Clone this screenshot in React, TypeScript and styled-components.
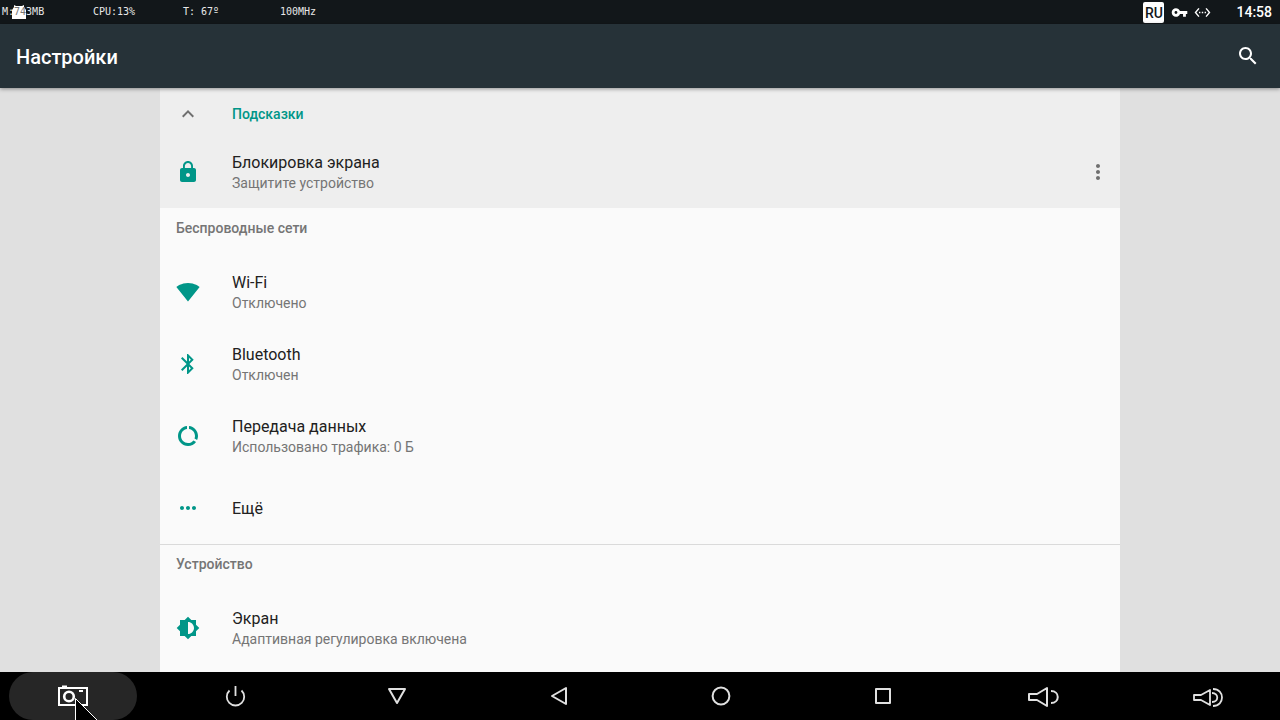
import React from "react";
import styled, { createGlobalStyle } from "styled-components";

const Global = createGlobalStyle`
  * { box-sizing: border-box; }
  body { margin: 0; background: #000; font-family: Roboto, "Liberation Sans", sans-serif; }
  button { border: 0; padding: 0; margin: 0; background: none; color: inherit; font: inherit; text-align: left; cursor: pointer; }
  svg { display: block; flex: none; }
`;

const Shell = styled.div`
  display: flex;
  flex-direction: column;
  height: 100vh;
  overflow: hidden;
`;

const StatusBar = styled.div`
  display: flex;
  justify-content: space-between;
  flex: none;
  height: 24px;
  padding: 0 8px 0 2px;
  background: #12171a;
  color: #fff;
`;

const Monitor = styled.div`
  position: relative;
  display: grid;
  grid-template-columns: 91px 90px 97px auto;
  color: #e8e8e8;
  font: 10px/23px "DejaVu Sans Mono", monospace;
  white-space: pre;
`;

const Notification = styled.svg`
  position: absolute;
  left: 10px;
  top: 5px;
`;

const Reading = styled.span`
  position: relative;
`;

const Covered = styled.span`
  color: #777;
`;

const Tray = styled.div`
  display: flex;
  align-items: center;
`;

const TrayIcons = styled.div`
  display: flex;
  gap: 6px;
  margin: 0 25px 0 7px;
`;

const Lang = styled.span`
  width: 21px;
  height: 21px;
  border-radius: 2px;
  background: #fff;
  color: #12171a;
  font-size: 14px;
  font-weight: 500;
  line-height: 22px;
  text-align: center;
`;

const Clock = styled.time`
  font-size: 14px;
  font-weight: 500;
  line-height: 24px;
`;

const AppBar = styled.header`
  position: relative;
  z-index: 1;
  display: flex;
  align-items: center;
  justify-content: space-between;
  flex: none;
  height: 64px;
  padding: 0 20px 0 16px;
  background: #263238;
  color: #fff;
  box-shadow: 0 1px 4px rgba(0, 0, 0, 0.4);
`;

const Title = styled.h1`
  margin: 0;
  padding-top: 2px;
  font-size: 20px;
  font-weight: 500;
  line-height: 24px;
`;

const Content = styled.main`
  display: flex;
  flex-direction: column;
  flex: 1;
  min-height: 0;
  padding: 0 12.5%;
  overflow: hidden;
  background: #e0e0e0;
`;

const Group = styled.section<{ $tinted?: boolean; $divided?: boolean }>`
  flex: none;
  background: ${(p) => (p.$tinted ? "#eeeeee" : "#fafafa")};
  box-shadow: ${(p) => (p.$divided ? "inset 0 1px #dadada" : "none")};

  &:last-child {
    flex: 1 0 auto;
  }
`;

const Line = styled.div`
  display: flex;
  align-items: center;
`;

const SuggestionHead = styled.button`
  display: flex;
  align-items: center;
  width: 100%;
  height: 48px;
  padding: 4px 16px 0;
  gap: 32px;
  color: #009688;
  font-size: 14px;
  font-weight: 500;

  svg {
    color: #6f6f6f;
  }
`;

const GroupTitle = styled.h2`
  margin: 0;
  padding: 10px 16px 18px;
  color: #757575;
  font-size: 14px;
  font-weight: 500;
  line-height: 20px;
`;

const Row = styled.button`
  display: flex;
  align-items: center;
  flex: 1;
  width: 100%;
  height: 72px;
  padding: 0 16px;
  gap: 32px;
  color: #009688;
`;

const RowText = styled.span`
  padding-top: 2px;
  line-height: 20px;
`;

const Label = styled.span`
  display: block;
  color: #212121;
  font-size: 16px;
`;

const Summary = styled.span`
  display: block;
  color: #757575;
  font-size: 14px;
`;

const IconButton = styled.button<{ $color: string }>`
  flex: none;
  color: ${(p) => p.$color};
`;

const MoreButton = styled(IconButton)`
  margin-right: 10px;
`;

const NavBar = styled.nav`
  display: flex;
  justify-content: space-between;
  flex: none;
  height: 48px;
  padding: 0 9px;
  background: #000;
`;

const NavButton = styled.button<{ $active?: boolean }>`
  display: flex;
  align-items: center;
  justify-content: center;
  flex: 0 1 128px;
  height: 48px;
  border-radius: 24px;
  background: ${(p) => (p.$active ? "#262626" : "transparent")};
  color: #e0e0e0;
`;

const NavArt = styled.svg`
  overflow: visible;
`;

const Glyph = ({ d, size = 24 }: { d: string; size?: number }) => (
  <svg width={size} height={size} viewBox="0 0 24 24" fill="currentColor" aria-hidden="true">
    <path d={d} />
  </svg>
);

const NavGlyph = ({ children }: { children: React.ReactNode }) => (
  <NavArt width="36" height="32" viewBox="0 0 36 32" fill="none" stroke="currentColor" strokeWidth="2" strokeLinejoin="round" aria-hidden="true">
    {children}
  </NavArt>
);

const icons = {
  search: "M15.5 14h-.79l-.28-.27C15.41 12.59 16 11.11 16 9.5 16 5.91 13.09 3 9.5 3S3 5.91 3 9.5 5.91 16 9.5 16c1.61 0 3.09-.59 4.23-1.57l.27.28v.79l5 4.99L20.49 19l-4.99-5zm-6 0C7.01 14 5 11.99 5 9.5S7.01 5 9.5 5 14 7.01 14 9.5 11.99 14 9.5 14z",
  collapse: "M12 8l-6 6 1.41 1.41L12 10.83l4.59 4.58L18 14z",
  lock: "M18 8h-1V6c0-2.76-2.24-5-5-5S7 3.24 7 6v2H6c-1.1 0-2 .9-2 2v10c0 1.1.9 2 2 2h12c1.1 0 2-.9 2-2V10c0-1.1-.9-2-2-2zm-6 9c-1.1 0-2-.9-2-2s.9-2 2-2 2 .9 2 2-.9 2-2 2zm3.1-9H8.9V6c0-1.71 1.39-3.1 3.1-3.1 1.71 0 3.1 1.39 3.1 3.1v2z",
  more: "M12 8c1.1 0 2-.9 2-2s-.9-2-2-2-2 .9-2 2 .9 2 2 2zm0 2c-1.1 0-2 .9-2 2s.9 2 2 2 2-.9 2-2-.9-2-2-2zm0 6c-1.1 0-2 .9-2 2s.9 2 2 2 2-.9 2-2-.9-2-2-2z",
  wifi: "M12.01 21.49L23.64 7c-.45-.34-4.93-4-11.64-4C5.28 3 .81 6.66.36 7l11.63 14.49.01.01.01-.01z",
  bluetooth: "M17.71 7.71L12 2h-1v7.59L6.41 5 5 6.41 10.59 12 5 17.59 6.41 19 11 14.41V22h1l5.71-5.71-4.3-4.29 4.3-4.29zM13 5.83l1.88 1.88L13 9.59V5.83zm1.88 10.46L13 18.17v-3.76l1.88 1.88z",
  data: "M13 2.05v3.03c3.39.49 6 3.39 6 6.92 0 .9-.18 1.75-.48 2.54l2.6 1.53c.56-1.24.88-2.62.88-4.07 0-5.18-3.95-9.45-9-9.95zM12 19c-3.87 0-7-3.13-7-7 0-3.53 2.61-6.43 6-6.92V2.05c-5.06.5-9 4.76-9 9.95 0 5.52 4.47 10 9.99 10 3.31 0 6.24-1.61 8.06-4.09l-2.6-1.53C16.17 17.98 14.21 19 12 19z",
  dots: "M6 10c-1.1 0-2 .9-2 2s.9 2 2 2 2-.9 2-2-.9-2-2-2zm12 0c-1.1 0-2 .9-2 2s.9 2 2 2 2-.9 2-2-.9-2-2-2zm-6 0c-1.1 0-2 .9-2 2s.9 2 2 2 2-.9 2-2-.9-2-2-2z",
  display: "M20 15.31L23.31 12 20 8.69V4h-4.69L12 .69 8.69 4H4v4.69L.69 12 4 15.31V20h4.69L12 23.31 15.31 20H20v-4.69zM12 18V6c3.31 0 6 2.69 6 6s-2.69 6-6 6z",
  key: "M12.65 10C11.83 7.67 9.61 6 7 6c-3.31 0-6 2.69-6 6s2.69 6 6 6c2.61 0 4.83-1.67 5.65-4H17v4h4v-4h2v-4H12.65zM7 14c-1.1 0-2-.9-2-2s.9-2 2-2 2 .9 2 2-.9 2-2 2z",
  ethernet: "M7.77 6.76L6.23 5.48.82 12l5.41 6.52 1.54-1.28L3.42 12l4.35-5.24zM7 13h2v-2H7v2zm10-2h-2v2h2v-2zm-6 2h2v-2h-2v2zm6.77-7.52l-1.54 1.28L20.58 12l-4.35 5.24 1.54 1.28L23.18 12l-5.41-6.52z",
};

type Setting = { icon: string; label: string; summary?: string };

const wireless: Setting[] = [
  { icon: icons.wifi, label: "Wi-Fi", summary: "Отключено" },
  { icon: icons.bluetooth, label: "Bluetooth", summary: "Отключен" },
  { icon: icons.data, label: "Передача данных", summary: "Использовано трафика: 0 Б" },
  { icon: icons.dots, label: "Ещё" },
];

const device: Setting[] = [
  { icon: icons.display, label: "Экран", summary: "Адаптивная регулировка включена" },
];

const SettingRow = ({ icon, label, summary }: Setting) => (
  <Row>
    <Glyph d={icon} />
    <RowText>
      <Label>{label}</Label>
      {summary && <Summary>{summary}</Summary>}
    </RowText>
  </Row>
);

const navItems = [
  { name: "Снимок экрана", art: (
    <>
      <path d="M4 8h28v17H4z" stroke="#fff" strokeLinejoin="miter" />
      <path d="M7 6.5h5M24 11h4" stroke="#fff" />
      <circle cx="14" cy="16.5" r="4.8" stroke="#fff" strokeWidth="2.6" />
      <path d="M20 18v24h24z" fill="#000" stroke="none" />
      <path d="M20.5 42V18.5l24 24" stroke="#fff" strokeWidth="1" />
    </>
  ) },
  { name: "Питание", art: <path d="M18.5 6v10M12.5 10.5a8.7 8.7 0 1 0 12 0" strokeWidth="1.8" /> },
  { name: "Скрыть", art: <path d="M10 9h16l-8 14z" /> },
  { name: "Назад", art: <path d="M25 8v16l-14-8z" /> },
  { name: "Домой", art: <circle cx="18" cy="16" r="8.4" /> },
  { name: "Обзор", art: <path d="M11 9h14v14H11z" /> },
  { name: "Тише", art: <path d="M2 14h8l10-6v18l-10-6H2zM24 11c9 0 9 12 0 12" /> },
  { name: "Громче", art: <path d="M5 15h7l9-5v15l-9-5H5zM23 13c7 0 7 9 0 9M24 9c12 0 12 17 0 17" strokeWidth="1.8" /> },
];

export default function App() {
  return (
    <Shell>
      <Global />
      <StatusBar>
        <Monitor>
          <Notification width="14" height="14" viewBox="0 0 14 14" fill="#fff" aria-hidden="true">
            <path d="M0 14V5l2-3V0l2 1h6l2-1v2l2 3v9z" />
          </Notification>
          <Reading>M:<Covered>74</Covered>3MB</Reading>
          <Reading>CPU:13%</Reading>
          <Reading>T: 67º</Reading>
          <Reading>100MHz</Reading>
        </Monitor>
        <Tray>
          <Lang>RU</Lang>
          <TrayIcons>
            <Glyph d={icons.key} size={17} />
            <Glyph d={icons.ethernet} size={17} />
          </TrayIcons>
          <Clock>14:58</Clock>
        </Tray>
      </StatusBar>
      <AppBar>
        <Title>Настройки</Title>
        <IconButton $color="#fff" aria-label="Поиск"><Glyph d={icons.search} /></IconButton>
      </AppBar>
      <Content>
        <Group $tinted>
          <SuggestionHead>
            <Glyph d={icons.collapse} />
            Подсказки
          </SuggestionHead>
          <Line>
            <SettingRow icon={icons.lock} label="Блокировка экрана" summary="Защитите устройство" />
            <MoreButton $color="#6f6f6f" aria-label="Ещё"><Glyph d={icons.more} /></MoreButton>
          </Line>
        </Group>
        <Group>
          <GroupTitle>Беспроводные сети</GroupTitle>
          {wireless.map((s) => <SettingRow key={s.label} {...s} />)}
        </Group>
        <Group $divided>
          <GroupTitle>Устройство</GroupTitle>
          {device.map((s) => <SettingRow key={s.label} {...s} />)}
        </Group>
      </Content>
      <NavBar>
        {navItems.map((n, i) => (
          <NavButton key={n.name} $active={i === 0} aria-label={n.name}>
            <NavGlyph>{n.art}</NavGlyph>
          </NavButton>
        ))}
      </NavBar>
    </Shell>
  );
}
